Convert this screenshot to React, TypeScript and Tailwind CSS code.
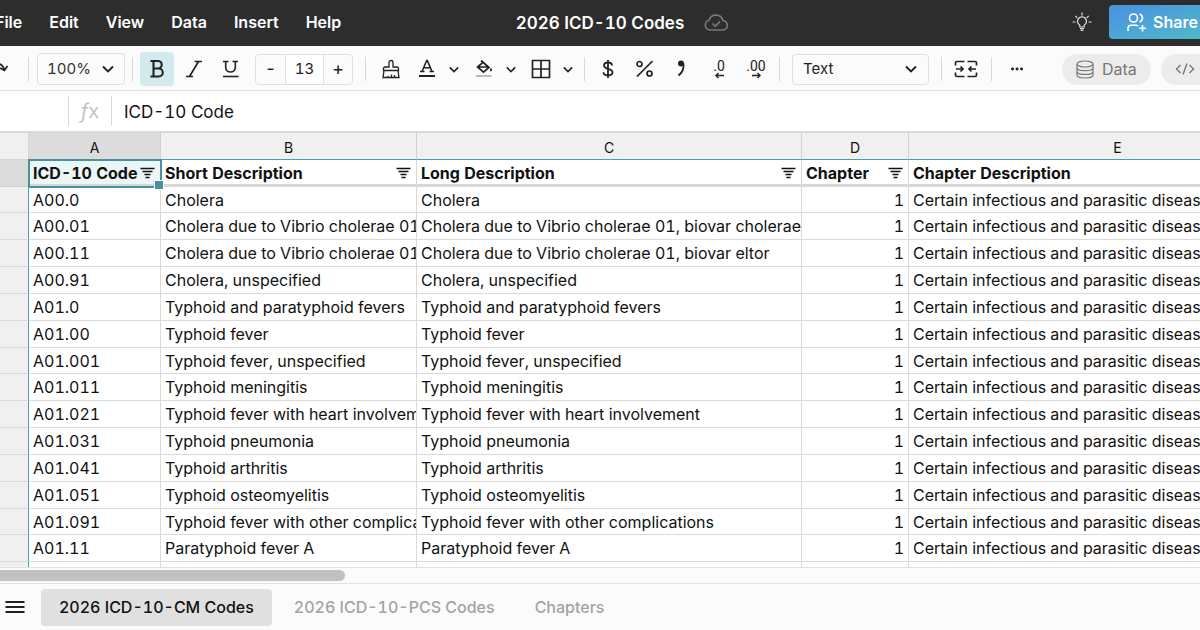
import type { ReactNode } from "react";

const columns = [
  { letter: "A", title: "ICD-10 Code", filter: true },
  { letter: "B", title: "Short Description", filter: true },
  { letter: "C", title: "Long Description", filter: true },
  { letter: "D", title: "Chapter", filter: true },
  { letter: "E", title: "Chapter Description", filter: false },
];

const chapter = "Certain infectious and parasitic diseases";

const codes = [
  ["A00.0", "Cholera"],
  ["A00.01", "Cholera due to Vibrio cholerae 01, biovar cholerae"],
  ["A00.11", "Cholera due to Vibrio cholerae 01, biovar eltor"],
  ["A00.91", "Cholera, unspecified"],
  ["A01.0", "Typhoid and paratyphoid fevers"],
  ["A01.00", "Typhoid fever"],
  ["A01.001", "Typhoid fever, unspecified"],
  ["A01.011", "Typhoid meningitis"],
  ["A01.021", "Typhoid fever with heart involvement"],
  ["A01.031", "Typhoid pneumonia"],
  ["A01.041", "Typhoid arthritis"],
  ["A01.051", "Typhoid osteomyelitis"],
  ["A01.091", "Typhoid fever with other complications"],
  ["A01.11", "Paratyphoid fever A"],
];

interface IconProps {
  children: ReactNode;
  className?: string;
  viewBox?: string;
}

const Icon = ({ children, className = "size-5", viewBox = "0 0 20 20" }: IconProps) => (
  <svg
    className={`shrink-0 ${className}`}
    viewBox={viewBox}
    fill="none"
    stroke="currentColor"
    strokeWidth={1.5}
    aria-hidden="true"
  >
    {children}
  </svg>
);

const Chevron = ({ className = "h-2 w-3" }: { className?: string }) => (
  <Icon className={className} viewBox="0 0 12 8">
    <path d="M1 1.5l5 5 5-5" strokeWidth={1.9} />
  </Icon>
);

const FilterIcon = () => (
  <Icon className="h-3 w-4" viewBox="0 0 16 12">
    <path d="M.5 1.5h14M2.5 4.5h10M4.5 7.5h6M5.5 10.5h4" strokeWidth={1.3} />
  </Icon>
);

interface ToolProps {
  label: string;
  children: ReactNode;
  active?: boolean;
}

const Tool = ({ label, children, active }: ToolProps) => (
  <button
    type="button"
    aria-label={label}
    aria-pressed={active}
    className={`flex h-[34px] w-[34px] shrink-0 items-center justify-center rounded-sm ${
      active ? "bg-[#d3ebef]" : ""
    }`}
  >
    {children}
  </button>
);

const MenuArrow = ({ label }: { label: string }) => (
  <button
    type="button"
    aria-label={label}
    className="flex h-[34px] w-5 shrink-0 items-center justify-center"
  >
    <Chevron className="h-[7px] w-[10px]" />
  </button>
);

const Divider = ({ className = "" }: { className?: string }) => (
  <div className={`h-6 w-px shrink-0 bg-[#d8d8d8] ${className}`} />
);

const Header = () => (
  <header className="grid h-[46px] shrink-0 grid-cols-[1fr_auto_1fr] items-center bg-[#2d2d2d] pb-0.5 text-base font-semibold text-white">
    <nav className="-ml-[18px] flex gap-px">
      {["File", "Edit", "View", "Data", "Insert", "Help"].map((item) => (
        <button key={item} type="button" className="px-[13px]">
          {item}
        </button>
      ))}
    </nav>
    <h1 className="pt-0.5 text-[17px] leading-6">2026 ICD-10 Codes</h1>
    <div className="flex items-center">
      <Icon className="ml-5 h-[17px] w-[25px] text-[#777]" viewBox="0 0 25 17">
        <path
          d="M6 16a5 5 0 0 1-1-9.8A7.3 7.3 0 0 1 19 6.5 4.8 4.8 0 0 1 19.3 16z"
          strokeWidth={1.7}
        />
        <path d="M8.5 9.5l2.8 2.8 4.8-5" strokeWidth={1.7} />
      </Icon>
      <button type="button" aria-label="Tips" className="ml-auto">
        <Icon className="size-5 text-[#e0e0e0]">
          <path d="M7.8 15v-1.7a4.5 4.5 0 1 1 4.4 0V15zM8 16.7h4M8.7 18.4h2.6" strokeWidth={1.2} />
          <path
            d="M10 .5v3M.5 10h3M16.5 10h3M3.3 3.8l2 2M16.7 3.8l-2 2"
            strokeWidth={1.2}
          />
        </Icon>
      </button>
      <button
        type="button"
        className="-mr-4 ml-[17px] flex h-[34px] w-[107px] items-center rounded-sm bg-linear-to-br from-[#4a90e2] to-[#50bcc4] pl-[18px] text-white"
      >
        <Icon className="mr-[7px] size-[19px]" viewBox="0 0 19 19">
          <circle cx="6.5" cy="5" r="4" strokeWidth={1.6} />
          <path
            d="M12.5 1a4.2 4.2 0 0 1 0 8M1 18v-2.5c0-2 1.2-3.3 3.2-3.3h4.6c1 0 1.8.3 2.3.8M15.5 12v6.5M12.2 15.3h6.6"
            strokeWidth={1.6}
          />
        </Icon>
        Share
      </button>
    </div>
  </header>
);

const Toolbar = () => (
  <div className="flex h-[45px] shrink-0 items-center overflow-hidden border-b border-[#e4e4e4] bg-[#fbfbfb] pt-0.5 text-[15px] text-[#222]">
    <button type="button" aria-label="Redo" className="-ml-3 shrink-0">
      <Icon>
        <path d="M3 9c4-6 11-6 13.5 2M19.5 7l-3 4.5-4.5-2.5" strokeWidth={1.7} />
      </Icon>
    </button>
    <Divider className="ml-5 mr-2" />
    <div className="relative shrink-0">
      <select
        aria-label="Zoom"
        className="h-8 w-[88px] appearance-none rounded border border-[#e0e0e0] pl-[9px] text-[#333]"
      >
        <option>100%</option>
      </select>
      <div className="pointer-events-none absolute inset-y-0 right-[11px] flex items-center">
        <Chevron />
      </div>
    </div>
    <Divider className="mx-[7px]" />
    <div className="flex gap-[3px]">
      <Tool label="Bold" active>
        <Icon>
          <path
            d="M3.5 2H11a3.6 3.6 0 0 1 0 7.5H6.5M11 9.5h.8a3.9 3.9 0 0 1 0 8H3.5M6.5 2v15.5"
            strokeWidth={2.1}
          />
        </Icon>
      </Tool>
      <Tool label="Italic">
        <Icon>
          <path d="M10.5 2.5H18M2 17.5h7M14.5 2.5l-9 15" strokeWidth={1.7} />
        </Icon>
      </Tool>
      <Tool label="Underline">
        <Icon>
          <path d="M2 2.5h5.5M11.5 2.5h5.5M4.7 2.5v6c0 6 9.6 6 9.6 0v-6" strokeWidth={1.6} />
          <path d="M2 17.5h15.5" strokeWidth={1.6} />
        </Icon>
      </Tool>
    </div>
    <div className="ml-[7px] flex h-[31px] w-[98px] shrink-0 items-stretch rounded border border-[#e0e0e0]">
      <button type="button" aria-label="Decrease font size" className="w-[29px] text-lg leading-7">
        -
      </button>
      <input
        aria-label="Font size"
        defaultValue="13"
        className="w-[39px] border-x border-[#e0e0e0] bg-white text-center"
      />
      <button type="button" aria-label="Increase font size" className="flex-1 text-lg leading-7">
        +
      </button>
    </div>
    <Divider className="ml-3 mr-2" />
    <Tool label="Paint format">
      <Icon>
        <path
          d="M2.5 11.5v-2c0-1 .6-1.5 1.5-1.5h4V3.5a2 2 0 0 1 4 0V8h4c1 0 1.5.5 1.5 1.5v2zM3 11.5l-1 7h16l-1-7M10.500 18.500v-3M13.500 18.500v-2.500M7 18.500v-1.500"
          strokeWidth={1.3}
        />
      </Icon>
    </Tool>
    <div className="ml-0.5 flex gap-[3px]">
      <div className="flex">
        <Tool label="Text color">
          <Icon>
            <path
              d="M5 12.5l4.700-11h.6l4.700 11M6.500 8.700h7M3 12.500h4.500M12.500 12.500H17"
              strokeWidth={1.6}
            />
            <path d="M2 17h16" strokeWidth={2} />
          </Icon>
        </Tool>
        <MenuArrow label="Text color options" />
      </div>
      <div className="flex">
        <Tool label="Fill color">
          <Icon>
            <path d="M7 1.5l8 7-5.5 4.700-6-5.200L9 3.300M3.800 8h10.500" strokeWidth={1.7} />
            <path d="M17 9.5c2 3.5-2 3.5 0 0z" fill="currentColor" strokeWidth={1} />
            <path d="M2 17h15.5" stroke="#aaa" strokeWidth={1.6} />
          </Icon>
        </Tool>
        <MenuArrow label="Fill color options" />
      </div>
      <div className="flex">
        <Tool label="Borders">
          <Icon>
            <path d="M1.5 1.5h17v17h-17zM10 1.5v17M1.5 10h17" strokeWidth={1.7} />
          </Icon>
        </Tool>
        <MenuArrow label="Border options" />
      </div>
    </div>
    <Divider className="mx-1.5" />
    <div className="flex gap-[3px]">
      <Tool label="Currency">
        <Icon>
          <path
            d="M10 1v18M14 6.5C14 2.5 6 2.5 6 6.5 6 11 14.5 8.5 14.5 13.3c0 4.2-9 4.2-9 0"
            strokeWidth={1.8}
          />
        </Icon>
      </Tool>
      <Tool label="Percent">
        <Icon>
          <circle cx="4.5" cy="5" r="2.5" strokeWidth={1.7} />
          <circle cx="14.5" cy="14.5" r="2.5" strokeWidth={1.7} />
          <path d="M17.5 2L2 17.5" strokeWidth={1.7} />
        </Icon>
      </Tool>
      <Tool label="Thousands separator">
        <Icon>
          <circle cx="9" cy="4.5" r="3" fill="currentColor" stroke="none" />
          <path d="M11.5 4.5c.5 5-1 9-5 12" strokeWidth={1.8} />
        </Icon>
      </Tool>
      <Tool label="Fewer decimals">
        <span className="flex flex-col items-center">
          <span className="font-['Roboto',sans-serif] text-sm leading-3">.0</span>
          <Icon className="h-[7px] w-[9px]" viewBox="0 0 9 7">
            <path d="M9 3.5H1M3.5 1L1 3.5 3.5 6" strokeWidth={1.4} />
          </Icon>
        </span>
      </Tool>
      <Tool label="More decimals">
        <span className="flex flex-col items-center">
          <span className="font-['Roboto',sans-serif] text-sm leading-3">.00</span>
          <Icon className="h-[7px] w-[9px]" viewBox="0 0 9 7">
            <path d="M0 3.5h8M5.5 1L8 3.5 5.5 6" strokeWidth={1.4} />
          </Icon>
        </span>
      </Tool>
    </div>
    <Divider className="ml-1.5 mr-3" />
    <div className="relative shrink-0">
      <select
        aria-label="Number format"
        className="h-[31px] w-[137px] appearance-none rounded border border-[#e0e0e0] pl-[10px]"
      >
        <option>Text</option>
      </select>
      <div className="pointer-events-none absolute inset-y-0 right-3 flex items-center">
        <Chevron />
      </div>
    </div>
    <Divider className="ml-3 mr-[7px]" />
    <Tool label="Merge cells">
      <Icon className="h-[18px] w-6" viewBox="0 0 24 18">
        <path
          d="M10.5 1.5H3A1.5 1.5 0 0 0 1.5 3v2.5M13.5 1.5H21A1.5 1.5 0 0 1 22.5 3v2.5M10.5 16.5H3A1.5 1.5 0 0 1 1.5 15v-2.5M13.5 16.5H21a1.5 1.5 0 0 0 1.5-1.5v-2.5"
          strokeWidth={1.7}
        />
        <path
          d="M2 9h6.5M6.5 6.500L9 9l-2.500 2.500M22 9h-6.500M17.500 6.500L15 9l2.500 2.500"
          strokeWidth={1.7}
        />
      </Icon>
    </Tool>
    <Divider className="mx-2" />
    <Tool label="More">
      <Icon>
        <path d="M5.5 10h.1M10 10h.1M14.5 10h.1" strokeWidth={2.9} strokeLinecap="round" />
      </Icon>
    </Tool>
    <button
      type="button"
      className="ml-7 flex h-[31px] shrink-0 items-center gap-2 rounded-full bg-[#ececec] px-[14px] text-base text-[#777]"
    >
      <Icon className="h-[19px] w-[18px]" viewBox="0 0 18 19">
        <ellipse cx="9" cy="4" rx="8" ry="3" strokeWidth={1.2} />
        <path
          d="M1 4v11c0 4 16 4 16 0V4M1 7.7c0 4 16 4 16 0M1 11.4c0 4 16 4 16 0"
          strokeWidth={1.2}
        />
      </Icon>
      Data
    </button>
    <button
      type="button"
      aria-label="Code"
      className="ml-[10px] flex h-[31px] w-[91px] shrink-0 items-center rounded-full bg-[#ececec] pl-[14px] text-[#777]"
    >
      <Icon>
        <path d="M5.5 6l-4 4 4 4M14.5 6l4 4-4 4M12 4.5l-4 11" strokeWidth={1.4} />
      </Icon>
    </button>
  </div>
);

const FormulaBar = () => (
  <div className="flex h-10 shrink-0 items-center bg-white">
    <div className="ml-[68px] h-[30px] w-px bg-[#d8d8d8]" />
    <label
      htmlFor="formula"
      className="w-[42px] text-center text-xl leading-6 text-[#c4c4c4]"
    >
      <i>f</i>x
    </label>
    <div className="h-[30px] w-px bg-[#d8d8d8]" />
    <input
      id="formula"
      defaultValue="ICD-10 Code"
      className="ml-3 flex-1 pt-0.5 text-[17px] leading-6 outline-none"
    />
  </div>
);

const Grid = () => (
  <main className="relative min-h-0 flex-1 overflow-hidden border-t-2 border-[#d9d9d9]">
    <table className="w-[1327px] table-fixed border-separate border-spacing-0 whitespace-nowrap text-base leading-5">
      <colgroup>
        <col className="w-[29px]" />
        <col className="w-[132px]" />
        <col className="w-[256px]" />
        <col className="w-[385px]" />
        <col className="w-[107px]" />
        <col className="w-[418px]" />
      </colgroup>
      <thead>
        <tr>
          <td className="h-[27px] border-b border-r border-[#d5d5d5] bg-[#f0f0f0]" />
          {columns.map((column, index) => (
            <th
              key={column.letter}
              scope="col"
              className={`h-[27px] border-b border-r border-b-[#4a9fae] border-r-[#d0d0d0] p-0 pt-1 text-sm font-normal ${
                index === 0 ? "bg-[#dcdcdc]" : "bg-[#f0f0f0]"
              }`}
            >
              {column.letter}
            </th>
          ))}
        </tr>
        <tr>
          <td className="border-b border-r border-b-[#d0d0d0] border-r-[#4a919e] bg-[#dcdcdc]" />
          {columns.map((column, index) => (
            <th
              key={column.letter}
              scope="col"
              className={`h-[27px] border-b-[3px] border-r border-[#d8d8d8] p-0 px-1 pt-0.5 font-bold ${
                index === 0
                  ? "relative bg-[#ebf6f7] outline-2 -outline-offset-1 outline-[#4a919e]"
                  : "bg-white"
              }`}
            >
              <div className="flex items-center justify-between">
                {column.title}
                {column.filter && (
                  <button type="button" aria-label={`Filter ${column.title}`}>
                    <FilterIcon />
                  </button>
                )}
              </div>
              {index === 0 && (
                <span className="absolute -bottom-1.5 -right-1 size-[10px] border border-white bg-[#4a919e]" />
              )}
            </th>
          ))}
        </tr>
      </thead>
      <tbody>
        {codes.map(([code, description]) => (
          <tr
            key={code}
            className="*:h-[27px] *:overflow-hidden *:border-b *:border-r *:border-[#dadada] *:p-0 *:px-1 nth-[6n+1]:*:h-[26px]"
          >
            <td className="border-r-[#4a9fae]! bg-[#f0f0f0]" />
            <td>{code}</td>
            <td>{description}</td>
            <td>{description}</td>
            <td className="text-right">1</td>
            <td>{chapter}</td>
          </tr>
        ))}
        <tr className="*:h-[27px] *:border-r *:border-[#dadada]">
          <td className="border-r-[#4a9fae]! bg-[#f0f0f0]" />
          {columns.map((column) => (
            <td key={column.letter} />
          ))}
        </tr>
      </tbody>
    </table>
  </main>
);

const Footer = () => (
  <footer className="shrink-0 bg-[#fbfbfb]">
    <div className="flex h-[17px] items-center border-y border-[#e2e2e2]">
      <div className="h-[11px] w-[345px] rounded-r-full bg-[#c1c1c1]" />
    </div>
    <div className="flex h-[46px] items-center gap-1 text-base font-medium text-[#a3a3a3]">
      <button type="button" aria-label="All sheets" className="ml-[5px] mr-3">
        <Icon>
          <path d="M.5 5h19M.5 10h19M.5 15h19" stroke="#222" strokeWidth={2} />
        </Icon>
      </button>
      <button type="button" className="h-[37px] rounded-sm bg-[#e0e0e0] px-[18px] text-[#111]">
        2026 ICD-10-CM Codes
      </button>
      <button type="button" className="h-[37px] px-[18px]">
        2026 ICD-10-PCS Codes
      </button>
      <button type="button" className="h-[37px] px-[18px]">
        Chapters
      </button>
    </div>
  </footer>
);

const App = () => (
  <div className="flex h-screen flex-col overflow-hidden bg-white font-['Inter',sans-serif] tabular-nums text-[#111]">
    <Header />
    <Toolbar />
    <FormulaBar />
    <Grid />
    <Footer />
  </div>
);

export default App;
